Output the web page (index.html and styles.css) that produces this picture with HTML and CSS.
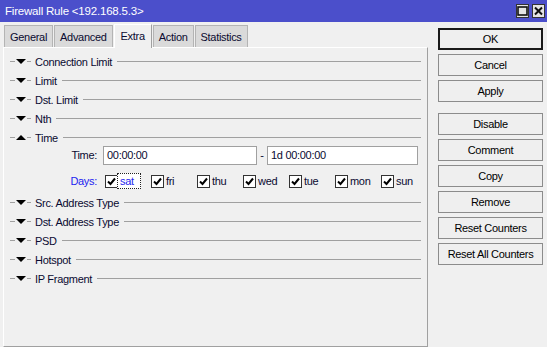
FILE: index.html
```html
<!DOCTYPE html>
<html lang="en">
<head>
  <meta charset="UTF-8">
  <title>Firewall Rule</title>
  <link rel="stylesheet" href="styles.css">
</head>
<body>
<div class="window">
  <div class="titlebar">
    <span class="title">Firewall Rule &lt;192.168.5.3&gt;</span>
    <div class="ctrls">
      <span class="ctrl"><svg width="11" height="10" viewBox="0 0 11 10"><rect x="1" y="1" width="9" height="8" fill="none" stroke="#111" stroke-width="1.6"/></svg></span>
      <span class="ctrl"><svg width="11" height="10" viewBox="0 0 11 10"><path d="M2 1.5 L9 8.5 M9 1.5 L2 8.5" stroke="#111" stroke-width="2"/></svg></span>
    </div>
  </div>
  <div class="content">
    <div class="main">
      <div class="tabs">
        <span class="tab">General</span>
        <span class="tab">Advanced</span>
        <span class="tab active">Extra</span>
        <span class="tab">Action</span>
        <span class="tab">Statistics</span>
      </div>
      <div class="panel">
        <div class="section"><span class="dash"></span><svg class="tri" width="10" height="5" viewBox="0 0 10 5"><polygon points="0,0 10,0 5,5" fill="#000"/></svg><span class="dash short"></span><span class="name">Connection Limit</span><span class="rule"></span></div>
        <div class="section"><span class="dash"></span><svg class="tri" width="10" height="5" viewBox="0 0 10 5"><polygon points="0,0 10,0 5,5" fill="#000"/></svg><span class="dash short"></span><span class="name">Limit</span><span class="rule"></span></div>
        <div class="section"><span class="dash"></span><svg class="tri" width="10" height="5" viewBox="0 0 10 5"><polygon points="0,0 10,0 5,5" fill="#000"/></svg><span class="dash short"></span><span class="name">Dst. Limit</span><span class="rule"></span></div>
        <div class="section"><span class="dash"></span><svg class="tri" width="10" height="5" viewBox="0 0 10 5"><polygon points="0,0 10,0 5,5" fill="#000"/></svg><span class="dash short"></span><span class="name">Nth</span><span class="rule"></span></div>
        <div class="section"><span class="dash"></span><svg class="tri" width="10" height="5" viewBox="0 0 10 5"><polygon points="0,5 10,5 5,0" fill="#000"/></svg><span class="dash short"></span><span class="name">Time</span><span class="rule"></span></div>

        <div class="field time-row">
          <span class="field-label">Time:</span>
          <span class="input wide">00:00:00</span>
          <span class="sep">-</span>
          <span class="input">1d 00:00:00</span>
        </div>
        <div class="field days-row">
          <span class="field-label blue">Days:</span>
          <div class="days">
            <span class="day"><span class="check"><svg width="11" height="11" viewBox="0 0 11 11"><path d="M2 5.5 L4.5 8 L9 2.5" fill="none" stroke="#000" stroke-width="2"/></svg></span><span class="day-name focus">sat</span></span>
            <span class="day"><span class="check"><svg width="11" height="11" viewBox="0 0 11 11"><path d="M2 5.5 L4.5 8 L9 2.5" fill="none" stroke="#000" stroke-width="2"/></svg></span><span class="day-name">fri</span></span>
            <span class="day"><span class="check"><svg width="11" height="11" viewBox="0 0 11 11"><path d="M2 5.5 L4.5 8 L9 2.5" fill="none" stroke="#000" stroke-width="2"/></svg></span><span class="day-name">thu</span></span>
            <span class="day"><span class="check"><svg width="11" height="11" viewBox="0 0 11 11"><path d="M2 5.5 L4.5 8 L9 2.5" fill="none" stroke="#000" stroke-width="2"/></svg></span><span class="day-name">wed</span></span>
            <span class="day"><span class="check"><svg width="11" height="11" viewBox="0 0 11 11"><path d="M2 5.5 L4.5 8 L9 2.5" fill="none" stroke="#000" stroke-width="2"/></svg></span><span class="day-name">tue</span></span>
            <span class="day"><span class="check"><svg width="11" height="11" viewBox="0 0 11 11"><path d="M2 5.5 L4.5 8 L9 2.5" fill="none" stroke="#000" stroke-width="2"/></svg></span><span class="day-name">mon</span></span>
            <span class="day"><span class="check"><svg width="11" height="11" viewBox="0 0 11 11"><path d="M2 5.5 L4.5 8 L9 2.5" fill="none" stroke="#000" stroke-width="2"/></svg></span><span class="day-name">sun</span></span>
          </div>
        </div>

        <div class="section"><span class="dash"></span><svg class="tri" width="10" height="5" viewBox="0 0 10 5"><polygon points="0,0 10,0 5,5" fill="#000"/></svg><span class="dash short"></span><span class="name">Src. Address Type</span><span class="rule"></span></div>
        <div class="section"><span class="dash"></span><svg class="tri" width="10" height="5" viewBox="0 0 10 5"><polygon points="0,0 10,0 5,5" fill="#000"/></svg><span class="dash short"></span><span class="name">Dst. Address Type</span><span class="rule"></span></div>
        <div class="section"><span class="dash"></span><svg class="tri" width="10" height="5" viewBox="0 0 10 5"><polygon points="0,0 10,0 5,5" fill="#000"/></svg><span class="dash short"></span><span class="name">PSD</span><span class="rule"></span></div>
        <div class="section"><span class="dash"></span><svg class="tri" width="10" height="5" viewBox="0 0 10 5"><polygon points="0,0 10,0 5,5" fill="#000"/></svg><span class="dash short"></span><span class="name">Hotspot</span><span class="rule"></span></div>
        <div class="section"><span class="dash"></span><svg class="tri" width="10" height="5" viewBox="0 0 10 5"><polygon points="0,0 10,0 5,5" fill="#000"/></svg><span class="dash short"></span><span class="name">IP Fragment</span><span class="rule"></span></div>
      </div>
    </div>
    <div class="actions">
      <button class="btn default">OK</button>
      <button class="btn">Cancel</button>
      <button class="btn">Apply</button>
      <button class="btn group">Disable</button>
      <button class="btn">Comment</button>
      <button class="btn">Copy</button>
      <button class="btn">Remove</button>
      <button class="btn">Reset Counters</button>
      <button class="btn">Reset All Counters</button>
    </div>
  </div>
</div>
</body>
</html>
```

FILE: styles.css
```css
* {
  box-sizing: border-box;
}
body {
  margin: 0;
  font-family: "Liberation Sans", Arial, sans-serif;
  font-size: 11px;
  letter-spacing: -0.3px;
  color: #0a0a30;
  background-color: #f0f0f0;
  overflow: hidden;
}
.window {
  width: 547px;
  height: 347px;
  display: flex;
  flex-direction: column;
}
.titlebar {
  height: 22px;
  flex: none;
  display: flex;
  align-items: center;
  justify-content: space-between;
  padding-left: 5px;
  background-color: #4b4fcb;
  color: #fff;
}
.title {
  font-size: 11.5px;
  letter-spacing: -0.2px;
}
.ctrls {
  display: flex;
  gap: 3px;
  margin-right: 2px;
}
.ctrl {
  width: 13px;
  height: 14px;
  display: flex;
  align-items: center;
  justify-content: center;
  background-color: #e4e4e4;
  border: 1px solid #333;
}
.content {
  flex: 1;
  display: flex;
  min-height: 0;
}
.main {
  width: 425px;
  flex: none;
  margin-left: 3px;
  display: flex;
  flex-direction: column;
}
.tabs {
  height: 25px;
  flex: none;
  display: flex;
  align-items: flex-end;
  gap: 1px;
  padding-left: 1px;
}
.tab {
  height: 22px;
  display: flex;
  align-items: center;
  padding: 0 5px;
  background-color: #dadada;
  border: 1px solid #b4b4b4;
  border-bottom: none;
}
.tab.active {
  height: 24px;
  margin-bottom: -1px;
  padding: 0 6px 1px;
  position: relative;
  z-index: 1;
  background-color: #f0f0f0;
  border-color: #fff #a0a0a0 #f0f0f0 #fff;
}
.panel {
  flex: 1;
  padding: 4px 6px 0;
  border: 1px solid;
  border-color: #fff #a0a0a0 #a0a0a0 #fff;
  overflow: hidden;
}
.section {
  height: 19px;
  display: flex;
  align-items: center;
}
.dash {
  width: 5px;
  height: 1px;
  flex: none;
  background-color: #a0a0a0;
}
.dash.short {
  width: 4px;
}
.tri {
  flex: none;
  margin: -1px 1px 0;
}
.name {
  margin-left: 4px;
  white-space: nowrap;
}
.rule {
  flex: 1;
  height: 1px;
  margin-left: 5px;
  background-color: #a0a0a0;
}
.field {
  display: flex;
  align-items: center;
  height: 20px;
  margin-left: 30px;
}
.time-row {
  margin-top: -2px;
}
.days-row {
  margin-top: 6px;
  margin-bottom: 2px;
}
.field-label {
  width: 57px;
  flex: none;
  text-align: right;
  margin-right: 6px;
}
.field-label.blue {
  color: #2323f0;
}
.input {
  width: 151px;
  height: 19px;
  flex: none;
  display: flex;
  align-items: center;
  padding-left: 3px;
  background-color: #fff;
  border: 1px solid #a0a0a0;
}
.input.wide {
  width: 154px;
}
.sep {
  width: 10px;
  flex: none;
  text-align: center;
}
.days {
  display: flex;
  flex: none;
  margin-left: 2px;
}
.day {
  width: 46px;
  flex: none;
  display: flex;
  align-items: center;
}
.check {
  width: 13px;
  height: 13px;
  flex: none;
  display: flex;
  align-items: center;
  justify-content: center;
  background-color: #fff;
  border: 1px solid #333;
}
.day-name {
  margin-left: -1px;
  padding: 0 6px 0 2px;
  height: 16px;
  display: flex;
  align-items: center;
  border: 1px solid transparent;
}
.day-name.focus {
  color: #2323f0;
  border: 1px dotted #222;
  background-color: #fff;
}
.actions {
  width: 105px;
  margin-left: 10px;
  padding-top: 6px;
  display: flex;
  flex-direction: column;
  gap: 4px;
}
.btn {
  height: 22px;
  flex: none;
  padding: 0;
  font-family: inherit;
  font-size: 11px;
  letter-spacing: -0.3px;
  color: #000;
  background-color: #efefef;
  border: 1px solid #8c8c8c;
}
.btn.default {
  border: 2px solid #1a1a1a;
}
.btn.group {
  margin-top: 7px;
}
```
